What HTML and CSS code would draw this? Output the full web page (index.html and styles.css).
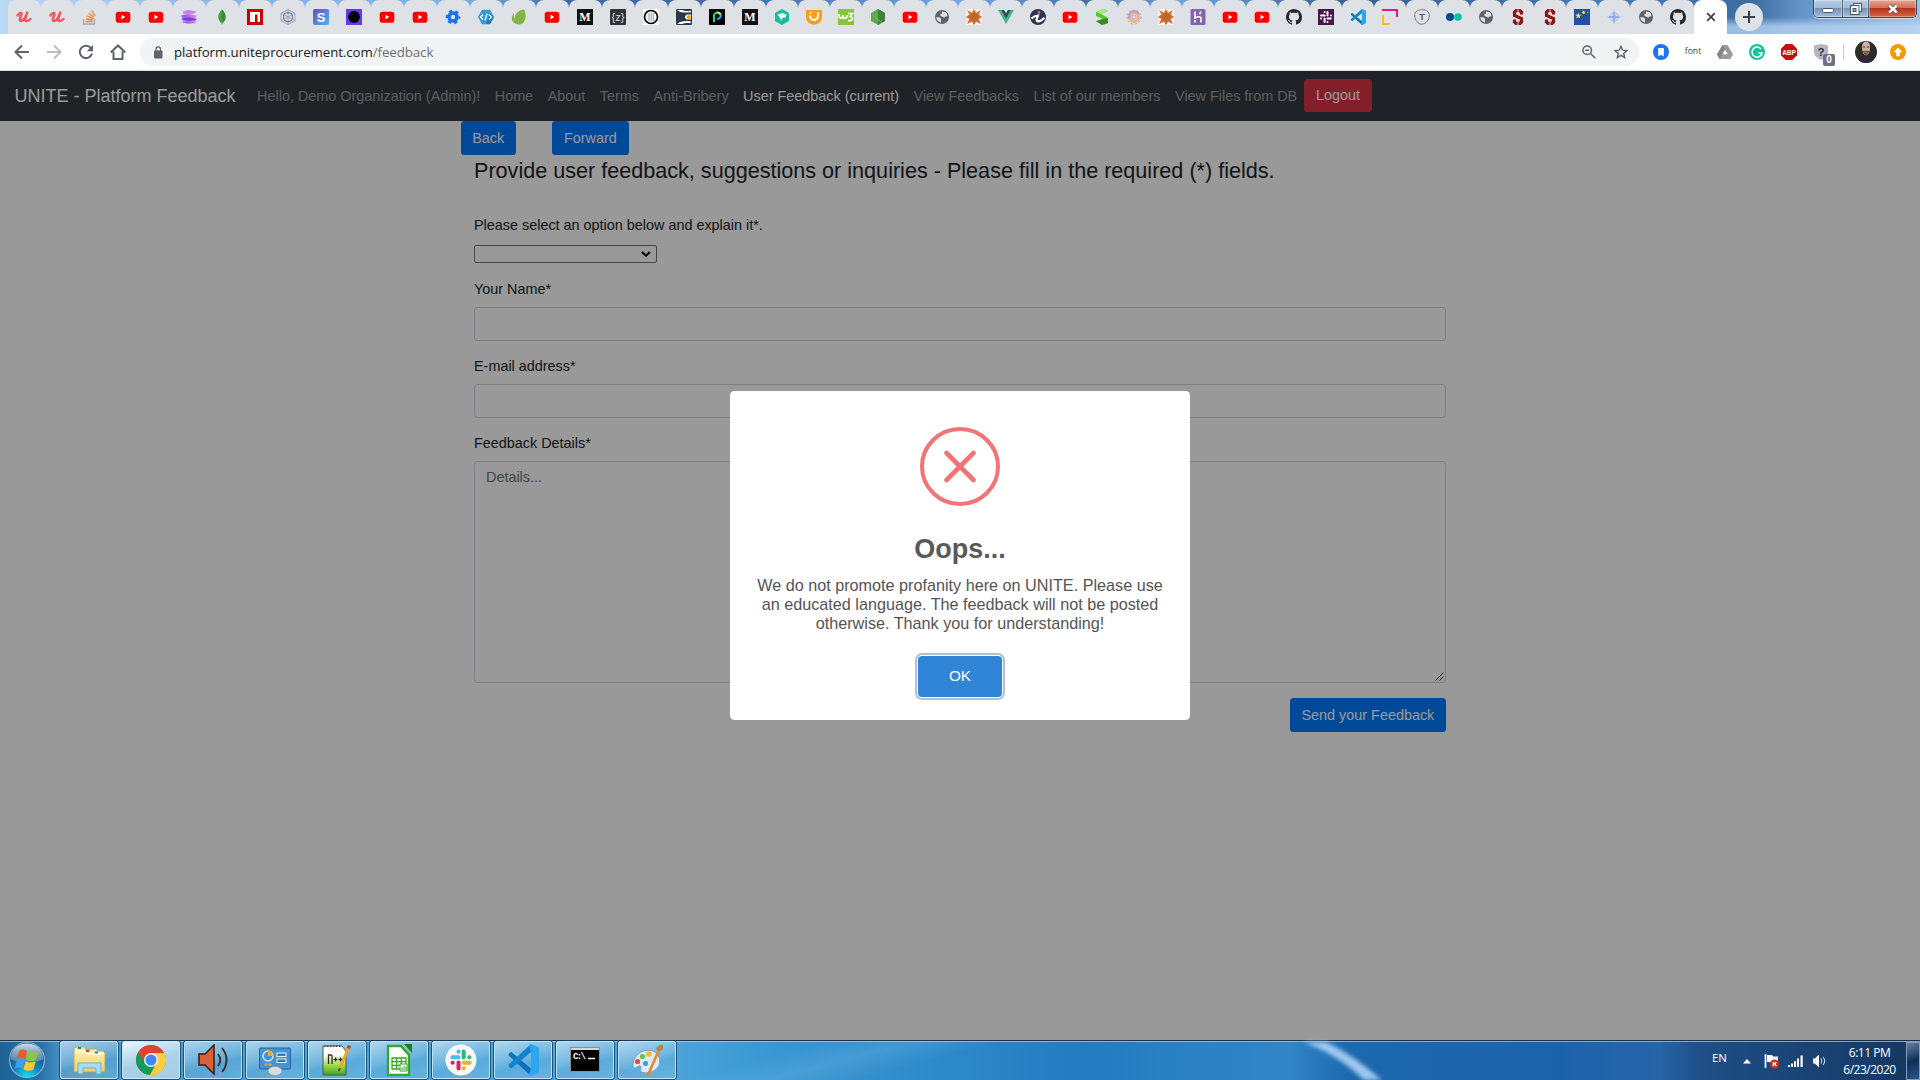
FILE: index.html
```html
<!DOCTYPE html>
<html lang="en">
<head>
<meta charset="utf-8">
<title>UNITE - Platform Feedback</title>
<link rel="stylesheet" href="styles.css">
</head>
<body>
<svg class="sprite" aria-hidden="true">
  <defs>
    <linearGradient id="gs" x1="0" y1="0" x2="1" y2="1"><stop offset="0" stop-color="#6a4bc4"/><stop offset="1" stop-color="#4db4f0"/></linearGradient>
    <linearGradient id="gl" x1="0" y1="0" x2="1" y2="0"><stop offset="0" stop-color="#8a4bf0"/><stop offset="1" stop-color="#f77fc0"/></linearGradient>
    <linearGradient id="gf" x1="0" y1="0" x2="0" y2="1"><stop offset="0" stop-color="#fff3b8"/><stop offset="1" stop-color="#e9cf6c"/></linearGradient>
    <linearGradient id="gn" x1="0" y1="0" x2="0" y2="1"><stop offset=".3" stop-color="#fff"/><stop offset=".65" stop-color="#a5dc4a"/><stop offset="1" stop-color="#3fa51c"/></linearGradient>
    <radialGradient id="go" cx=".5" cy="1" r=".9"><stop offset="0" stop-color="#12e4fb"/><stop offset=".45" stop-color="#1583b8"/><stop offset="1" stop-color="#16486e"/></radialGradient>
    <linearGradient id="gh" x1="0" y1="0" x2="0" y2="1"><stop offset="0" stop-color="#e4f0f8" stop-opacity=".9"/><stop offset="1" stop-color="#9fb9cb" stop-opacity=".35"/></linearGradient>
  </defs>
  <symbol id="udemy" viewBox="0 0 16 16"><path d="M1.500 6.500C3.500 3.300 6.200 3.200 5.400 5.500L4 9.500c-1 3.500 2.500 3.500 5-.5l2.300-5.500-1.900 6c-.8 3.300 2 3.500 5.100.5" fill="none" stroke="#f2545b" stroke-width="2.400" stroke-linecap="round" stroke-linejoin="round"/></symbol>
  <symbol id="stack" viewBox="0 0 16 16"><path d="M1.500 10v5h11v-5" fill="none" stroke="#a5a7aa" stroke-width="1.300"/><path d="M3.700 12.500h6.800M4 9.800l6.700 1.200M4.900 7l6.200 2.600M6.700 4.200l5.100 4.100M9.500 1.500l3.400 5.400" stroke="#ef8236" stroke-width="1.300"/></symbol>
  <symbol id="yt" viewBox="0 0 16 16"><rect x=".7" y="2.700" width="14.600" height="11" rx="2.800" fill="#f00"/><path d="M6.500 5.800v4.600L10.300 8z" fill="#fff"/></symbol>
  <symbol id="layers" viewBox="0 0 16 16"><path d="M2 2.500L7 1l8 1.500-1.500 2L7 5 2 4.500z" fill="#c77cf2"/><path d="M0 6.500l7-1.500 9 1.500-2 2.200-7 .5-6-.7z" fill="url(#gl)"/><path d="M1 9.300l7-.8 8 1.200-1.500 1.800-7 .5-6-.7z" fill="#5b45f5"/><path d="M0 13l7-1.300 9 .8-2 1.700-7 .6z" fill="url(#gl)"/></symbol>
  <symbol id="mongo" viewBox="0 0 16 16"><path d="M8 .5c-5 5-5 10 0 14.500z" fill="#46a037"/><path d="M8 .5c5 5 5 10 0 14.500z" fill="#3a8a2e"/><path d="M8 12v4" stroke="#9aa" stroke-width=".7"/></symbol>
  <symbol id="npm" viewBox="0 0 16 16"><path fill="#c00" d="M0 0h16v16H0z"/><path fill="#fff" d="M3 3h10v10h-2.500V5.500H8V13H3z"/></symbol>
  <symbol id="wire" viewBox="0 0 16 16"><g fill="none" stroke="#8ea0c0" stroke-width=".9"><path d="M8 .5l7 3.700v7.600l-7 3.700-7-3.700V4.200z"/><path d="M8 .5v15M1 4.200l14 7.600M15 4.200L1 11.800"/><circle cx="8" cy="8" r="4.500" stroke="#80858c" stroke-width="1.300"/></g></symbol>
  <symbol id="disc" viewBox="0 0 16 16"><path fill="#6c35f5" d="M0 0h16v16H0z"/><circle cx="8" cy="8" r="5.900"/></symbol>
  <symbol id="gear" viewBox="0 0 16 16"><circle cx="8" cy="8" r="4" fill="none" stroke="#1a73e8" stroke-width="3.600"/><circle cx="8" cy="8" r="6" fill="none" stroke="#1a73e8" stroke-width="2.600" stroke-dasharray="3.140 3.143" stroke-dashoffset="1.500"/></symbol>
  <symbol id="code" viewBox="0 0 16 16"><path d="M4 .8h8L16 8l-4 7.200H4L0 8z" fill="#3498db"/><path d="M8 15h4l4-7-4-4z" fill="#257bb5"/><path d="M5 5.500L2.500 8 5 10.500M11 5.500L13.500 8 11 10.500M9 4.500l-2 7" fill="none" stroke="#fff" stroke-width="1.200"/></symbol>
  <symbol id="leaf" viewBox="0 0 16 16"><path d="M13 .5c3 5 2 15-5 15C-1 15 0 7 3 4c-.2 4 0 5 .6 6C4 4 8 1 13 .5z" fill="#82b541"/></symbol>
  <symbol id="ring" viewBox="0 0 16 16"><path fill="#fff" d="M0 0h16v16H0z"/><circle cx="8" cy="8" r="6.500" fill="none" stroke="#000" stroke-width="1.700"/><path d="M6 4v8M8.200 3.500v9M10.300 4v8" stroke="#aaa" stroke-width="1.200"/></symbol>
  <symbol id="eye" viewBox="0 0 16 16"><rect width="16" height="16" rx="1" fill="#2b3a4a"/><path d="M1 1c4 3 8 3 14 2v2.500h-4.500c-2 1.500-2 3.500 0 5H15v2c-6-1-10-.5-14 2.500h5c3-1.500 6-1 9-.7V1.700C12 2 9 2.500 6 1z" fill="#fff"/><circle cx="12.800" cy="8" r="2.100" fill="#ffa000"/></symbol>
  <symbol id="pea" viewBox="0 0 16 16"><path d="M0 0h16v16H0z"/><path d="M5 13V8a3.600 3.600 0 0 1 3.500-4.500" fill="none" stroke="#20d878" stroke-width="2"/><path d="M8 3.500c5 0 5 6 0 6.500" fill="none" stroke="#25a8f5" stroke-width="2"/><path d="M8 3.500c2 0 3 .8 3.500 2" fill="none" stroke="#ffe11a" stroke-width="2"/></symbol>
  <symbol id="hexg" viewBox="0 0 16 16"><path d="M8 0l7 4v8l-7 4-7-4V4z" fill="#16bf9b"/><path d="M3.500 5.500L8 4l4.500 1.500L11 9H8l-.5 3L6 9z" fill="#fff"/></symbol>
  <symbol id="cup" viewBox="0 0 16 16"><path d="M0 1h16v7c0 10-16 10-16 0z" fill="#f9a01b"/><path d="M4 6.500c0 6 8 6 8 0V3.500" fill="none" stroke="#fff" stroke-width="2"/><circle cx="4.500" cy="4" r="1" fill="#fff"/></symbol>
  <symbol id="w3" viewBox="0 0 16 16"><path fill="#86c540" d="M0 0h16v16H0z"/><path d="M1 5c0 6 4 5 4 1 0 5 4 4 4.500 0M10 4.500h4.500L12 7.500c4 .5 3 5-2 4" fill="none" stroke="#fff" stroke-width="1.700"/></symbol>
  <symbol id="node" viewBox="0 0 16 16"><path d="M8 0l7 4v8l-7 4-7-4V4z" fill="#5fa84f"/><path d="M8 0l7 4v8l-7 4z" fill="#3c8539"/><path d="M1 4l11 10" stroke="#77bd61"/></symbol>
  <symbol id="globe" viewBox="0 0 16 16"><circle cx="8" cy="8" r="7" fill="#5f6368"/><path d="M8 2.500c3.500-.5 5.500 2 5.500 4-1 1.500-2.200.7-3.200 2.200L8 7.500C5 7 6 4.500 8 4.800zM2.300 8.300c2.500 0 4-.3 4.700 1.500.5 1-.5 1.700.2 3.600-3-.2-4.900-2.600-4.900-5.100z" fill="#dee1e6"/></symbol>
  <symbol id="sun" viewBox="0 0 16 16"><path fill="#f4f0e8" d="M0 0h16v16H0z"/><path d="M8 0l2 4 5-3-2.500 4.500L16 8l-3.500 2L15 15l-5-2.500L8 16l-2-3.500L1 15l2.500-5L0 8l3.500-2.500L1 1l5 3z" fill="#d8642c"/><path d="M8 3v10M3 8h10M4.500 4.500l7 7M11.500 4.500l-7 7" stroke="#957033" stroke-width=".8"/></symbol>
  <symbol id="vue" viewBox="0 0 16 16"><path d="M0 1h6l2 3.500L10 1h6L8 15z" fill="#41b883"/><path d="M3.200 1H6l2 3.500L10 1h2.800L8 9.500z" fill="#35495e"/></symbol>
  <symbol id="eyei" viewBox="0 0 16 16"><circle cx="8" cy="8" r="8" fill="#2c3553"/><path d="M1.500 9.500c2-2 3.500-2.800 6.500-3L6.500 11c0 1.500 2 1.700 4 .8l4-3" fill="none" stroke="#fff" stroke-width="2.200"/><circle cx="9" cy="3.400" r="1.400" fill="#f16a4f"/></symbol>
  <symbol id="ribbon" viewBox="0 0 16 16"><path d="M2 3l8-3 4 2-7 3 7 4v5l-6 2-6-4 7 1V10L2 7z" fill="#56c62c"/><path d="M9 10l5-1v5l-6 2-6-4z" fill="#2c9321"/><path d="M2 3l8-3 4 2-7 3z" fill="#a4eb76"/></symbol>
  <symbol id="donut" viewBox="0 0 16 16"><circle cx="8" cy="8" r="4.500" fill="none" stroke="#ecb58b" stroke-width="3.500"/><path d="M3.500 9.500a5 5 0 0 1 9-4.500" fill="none" stroke="#bda2c9" stroke-width="2.500"/><circle cx="8" cy="8" r="7.100" fill="none" stroke="#b8a3c0" stroke-width="1" stroke-dasharray="2 2"/><circle cx="8" cy="8" r="2" fill="#e8dfe6" stroke="#b49ac0" stroke-width=".8"/></symbol>
  <symbol id="heroku" viewBox="0 0 16 16"><rect x=".5" width="15" height="16" rx="1.500" fill="#8365ac"/><path d="M5 2.500V9c4-2 6-1.500 6 .5v4M10.700 2.500c0 1-.5 2-1.200 2.500M5 11v2.500" fill="none" stroke="#fff" stroke-width="1.600"/></symbol>
  <symbol id="github" viewBox="0 0 16 16"><path fill="#24292e" d="M8 0C3.580 0 0 3.580 0 8c0 3.540 2.290 6.530 5.470 7.590.4.070.55-.17.55-.38 0-.19-.01-.82-.01-1.490-2.010.37-2.530-.49-2.690-.94-.09-.23-.48-.94-.82-1.130-.28-.15-.68-.52-.01-.53.63-.01 1.080.58 1.230.82.72 1.210 1.870.87 2.330.66.07-.52.28-.87.51-1.070-1.780-.2-3.640-.89-3.640-3.950 0-.87.31-1.590.82-2.150-.08-.2-.36-1.020.08-2.120 0 0 .67-.21 2.200.82.64-.18 1.320-.27 2-.27s1.360.09 2 .27c1.530-1.040 2.200-.82 2.200-.82.44 1.100.16 1.920.08 2.120.51.56.82 1.270.82 2.150 0 3.070-1.870 3.750-3.650 3.950.29.25.54.73.54 1.480 0 1.070-.01 1.930-.01 2.200 0 .21.15.46.55.38A8 8 0 0 0 16 8c0-4.420-3.580-8-8-8z"/></symbol>
  <symbol id="slackd" viewBox="0 0 16 16"><path fill="#4a154b" d="M0 0h16v16H0z"/><g stroke="#fff" stroke-width="2" stroke-linecap="round" fill="none"><path d="M6.600 3v.1M3 6.500h3.700M13 6.500h-.1M9.500 3v3.500M9.500 13v-.1M13 9.500H9.500M3 9.500h.1M6.600 13V9.500"/></g></symbol>
  <symbol id="vscode" viewBox="0 0 16 16"><path d="M1 4.600L2.200 4 12 12.200V16L.8 5.700z" fill="#0e71b8"/><path d="M.8 10.300L12 0v4L2.200 12.200 1 11.500z" fill="#1184d0"/><path d="M12 0l4 1.800v12.400L12 16l-1-.6 1-3.200V3.800L11 .6z" fill="#2da6ee"/></symbol>
  <symbol id="corner" viewBox="0 0 16 16"><path d="M0 1h15v7" fill="none" stroke="#f0127f" stroke-width="2"/><path d="M1 6v9h7" fill="none" stroke="#fdbf0f" stroke-width="2"/></symbol>
  <symbol id="flickr" viewBox="0 0 16 16"><circle cx="4" cy="8" r="4" fill="#06498a"/><circle cx="12" cy="8" r="3.800" fill="#06c39b"/></symbol>
  <symbol id="stanford" viewBox="0 0 16 16"><path d="M11.500 5.500V3L10 1.700H6L4.500 3v3.500l7 3V13L10 14.300H6L4.500 13v-2.500" fill="none" stroke="#8c1515" stroke-width="3.200"/><path d="M8 0v4.500M8 11.500V16" stroke="#e3cdd0" stroke-width="1"/></symbol>
  <symbol id="eu" viewBox="0 0 16 16"><path fill="#2250a4" d="M0 0h16v16H0z"/><path d="M4.300 3.500l.9 2.300h2.400L5.700 7.300l.7 2.300-2.100-1.400-2.100 1.400.7-2.300L1 5.800h2.400zM9 1.500l1.800 1L11 4.500l-2 .5-1-1.500zM13.500 2.500l1 .5-.5 1-1-.5z" fill="#fde41a"/></symbol>
  <symbol id="compass" viewBox="0 0 16 16"><circle cx="8" cy="8" r="4.200" fill="none" stroke="#a9bde8"/><path d="M8 0l1.200 6.800L16 8l-6.800 1.200L8 16 6.800 9.200 0 8l6.800-1.200z" fill="#7c9ee6" opacity=".8"/></symbol>
</svg>

<header class="browser">
  <div class="tabstrip">
    <div class="tabs">
      <div class="tab"><svg><use href="#udemy"/></svg></div>
      <div class="tab"><svg><use href="#udemy"/></svg></div>
      <div class="tab"><svg><use href="#stack"/></svg></div>
      <div class="tab"><svg><use href="#yt"/></svg></div>
      <div class="tab"><svg><use href="#yt"/></svg></div>
      <div class="tab"><svg><use href="#layers"/></svg></div>
      <div class="tab"><svg><use href="#mongo"/></svg></div>
      <div class="tab"><svg><use href="#npm"/></svg></div>
      <div class="tab"><svg><use href="#wire"/></svg></div>
      <div class="tab"><svg viewBox="0 0 16 16"><rect width="16" height="16" rx="2" fill="url(#gs)"/><text x="8" y="12.500" text-anchor="middle" font-size="13" font-weight="900" fill="#fff">S</text></svg></div>
      <div class="tab"><svg><use href="#disc"/></svg></div>
      <div class="tab"><svg><use href="#yt"/></svg></div>
      <div class="tab"><svg><use href="#yt"/></svg></div>
      <div class="tab"><svg><use href="#gear"/></svg></div>
      <div class="tab"><svg><use href="#code"/></svg></div>
      <div class="tab"><svg><use href="#leaf"/></svg></div>
      <div class="tab"><svg><use href="#yt"/></svg></div>
      <div class="tab"><svg viewBox="0 0 16 16"><path fill="#111" d="M0 0h16v16H0z"/><text x="8" y="12" text-anchor="middle" font-family="Liberation Serif" font-weight="bold" font-size="12" fill="#fff">M</text></svg></div>
      <div class="tab"><svg viewBox="0 0 16 16"><rect width="16" height="16" rx="1" fill="#333"/><text x="8" y="11.500" text-anchor="middle" font-size="11" fill="#ddd">{z}</text></svg></div>
      <div class="tab"><svg><use href="#ring"/></svg></div>
      <div class="tab"><svg><use href="#eye"/></svg></div>
      <div class="tab"><svg><use href="#pea"/></svg></div>
      <div class="tab narrow"><svg viewBox="0 0 16 16"><path fill="#111" d="M0 0h16v16H0z"/><text x="8" y="12" text-anchor="middle" font-family="Liberation Serif" font-weight="bold" font-size="12" fill="#fff">M</text></svg></div>
      <div class="tab narrow"><svg><use href="#hexg"/></svg></div>
      <div class="tab narrow"><svg><use href="#cup"/></svg></div>
      <div class="tab narrow"><svg><use href="#w3"/></svg></div>
      <div class="tab narrow"><svg><use href="#node"/></svg></div>
      <div class="tab narrow"><svg><use href="#yt"/></svg></div>
      <div class="tab narrow"><svg><use href="#globe"/></svg></div>
      <div class="tab narrow"><svg><use href="#sun"/></svg></div>
      <div class="tab narrow"><svg><use href="#vue"/></svg></div>
      <div class="tab narrow"><svg><use href="#eyei"/></svg></div>
      <div class="tab narrow"><svg><use href="#yt"/></svg></div>
      <div class="tab narrow"><svg><use href="#ribbon"/></svg></div>
      <div class="tab narrow"><svg><use href="#donut"/></svg></div>
      <div class="tab narrow"><svg><use href="#sun"/></svg></div>
      <div class="tab narrow"><svg><use href="#heroku"/></svg></div>
      <div class="tab narrow"><svg><use href="#yt"/></svg></div>
      <div class="tab narrow"><svg><use href="#yt"/></svg></div>
      <div class="tab narrow"><svg><use href="#github"/></svg></div>
      <div class="tab narrow"><svg><use href="#slackd"/></svg></div>
      <div class="tab narrow"><svg><use href="#vscode"/></svg></div>
      <div class="tab narrow"><svg><use href="#corner"/></svg></div>
      <div class="tab narrow"><svg viewBox="0 0 16 16"><path d="M8 .7c5-.2 7.500 2.500 7.300 6.300S12 15 8 15.200 1 11 .7 7 3 .9 8 .7z" fill="none" stroke="#777"/><text x="8" y="11.200" text-anchor="middle" font-size="9" font-weight="bold" fill="#555">T</text></svg></div>
      <div class="tab narrow"><svg><use href="#flickr"/></svg></div>
      <div class="tab narrow"><svg><use href="#globe"/></svg></div>
      <div class="tab narrow"><svg><use href="#stanford"/></svg></div>
      <div class="tab narrow"><svg><use href="#stanford"/></svg></div>
      <div class="tab narrow"><svg><use href="#eu"/></svg></div>
      <div class="tab narrow"><svg><use href="#compass"/></svg></div>
      <div class="tab narrow"><svg><use href="#globe"/></svg></div>
      <div class="tab narrow last"><svg><use href="#github"/></svg></div>
      <div class="tab active"><svg viewBox="0 0 16 16"><path d="M4.200 4.200l7.600 7.600M11.800 4.200l-7.600 7.600" stroke="#3c4043" stroke-width="1.700"/></svg></div>
    </div>
    <div class="newtab"><svg width="12" height="12"><path d="M6 0v12M0 6h12" stroke="#3c4043" stroke-width="2"/></svg></div>
    <div class="winbtns">
      <span class="wb wb-min"><svg width="13" height="6"><rect x=".5" y=".5" width="11" height="4" rx="1" fill="#fff" stroke="#4a5670"/></svg></span>
      <span class="wb wb-max"><svg width="12" height="12"><rect x="3.500" y=".5" width="8" height="8" fill="#fff" stroke="#4a5670"/><rect x=".5" y="2.500" width="8.500" height="9" fill="#fff" stroke="#4a5670"/><rect x="3" y="5.500" width="3" height="3" fill="#89a2c0" stroke="#4a5670"/></svg></span>
      <span class="wb wb-close"><svg width="12" height="10"><path d="M2 1.500l8 7M10 1.500l-8 7" stroke="#5a3a40" stroke-width="4.200"/><path d="M2.200 1.500l7.600 7M9.800 1.500l-7.600 7" stroke="#fff" stroke-width="2.600"/></svg></span>
    </div>
  </div>

  <div class="toolbar">
    <div class="navicons">
      <svg viewBox="0 0 16 16"><path d="M15 8H2M8 1.500L1.500 8 8 14.500" fill="none" stroke="#5f6368" stroke-width="2"/></svg>
      <svg viewBox="0 0 16 16"><path d="M1 8h13M8 1.500L14.500 8 8 14.500" fill="none" stroke="#babcbe" stroke-width="2"/></svg>
      <svg viewBox="0 0 16 16"><path d="M13 4.200A6.200 6.200 0 1 0 14 9.500" fill="none" stroke="#5f6368" stroke-width="2"/><path d="M15 1v6.300H8.800z" fill="#5f6368"/></svg>
      <svg viewBox="0 0 16 16"><path d="M3.500 7.500V15h9V7.500M.7 8.500L8 1.500l7.300 7" fill="none" stroke="#5f6368" stroke-width="2"/></svg>
    </div>
    <div class="omnibox">
      <svg class="lock" viewBox="0 0 10 13"><rect x="1" y="4.500" width="8.500" height="8" rx="1" fill="#5f6368"/><path d="M3 5V3.200a2.200 2.200 0 0 1 4.500 0V5" fill="none" stroke="#5f6368" stroke-width="1.300"/></svg>
      <span class="url">platform.uniteprocurement.com<span class="path">/feedback</span></span>
      <svg class="mag" viewBox="0 0 14 14"><circle cx="5.200" cy="5.200" r="4.300" fill="none" stroke="#5f6368" stroke-width="1.500"/><path d="M8.500 8.500l4.800 4.800M3.200 5.200h4" stroke="#5f6368" stroke-width="1.500"/></svg>
      <svg class="star" viewBox="0 0 14 14"><path d="M7 1.200l1.700 4 4.300.4-3.300 2.800 1 4.200L7 10.300l-3.700 2.300 1-4.200L1 5.600l4.300-.4z" fill="none" stroke="#5f6368" stroke-width="1.400"/></svg>
    </div>
    <div class="exts">
      <span class="ext"><svg viewBox="0 0 16 16"><circle cx="8" cy="8" r="8" fill="#1a73f8"/><path d="M5.200 4h5.600v8.500L8 10.800l-2.800 1.700z" fill="#fff"/></svg></span>
      <span class="ext fonttxt">font</span>
      <span class="ext"><svg viewBox="0 0 16 16"><path d="M5.500 1h5L16 10.500 13.300 15H2.700L0 10.500z" fill="#9a9a9a"/><path d="M0 10.500L5.500 1 8 5.500 2.700 15z" fill="#858585"/><path d="M8 5.700l2.700 4.600H5.300z" fill="#fff"/></svg></span>
      <span class="ext"><svg viewBox="0 0 16 16"><circle cx="8" cy="8" r="8" fill="#15c39a"/><path d="M12 5a5 5 0 1 0 1 4H9.500M12.500 9v3" fill="none" stroke="#fff" stroke-width="1.500"/></svg></span>
      <span class="ext"><svg viewBox="0 0 16 16"><path d="M4.700 0h6.600L16 4.700v6.600L11.300 16H4.700L0 11.300V4.700z" fill="#c70d0d"/><text x="1.200" y="10.700" font-size="7.500" font-weight="bold" fill="#fff" textLength="13.600" lengthAdjust="spacingAndGlyphs">ABP</text></svg></span>
      <span class="ext shield"><svg viewBox="0 0 16 16"><path d="M1 1.500L8 0l7 1.500V8c0 4-4 6.500-7 8-3-1.500-7-4-7-8z" fill="#b5b5c5"/><text x="8" y="11.500" text-anchor="middle" font-size="11.500" font-weight="bold" fill="#333">?</text></svg><b class="count">0</b></span>
    </div>
    <i class="vsep"></i>
    <svg class="avatar" viewBox="0 0 22 22"><clipPath id="av"><circle cx="11" cy="11" r="11"/></clipPath><g clip-path="url(#av)"><path fill="#2a2e25" d="M0 0h22v22H0z"/><path d="M2 22c1-6 5-7 9-7s9 2 10 7z" fill="#33243d"/><path d="M7 5c0-6 8-6 8 0 0 5-1 9-4 9S7 10 7 5z" fill="#d0b0a2"/><path d="M7.800 10c2-.8 4.500-.8 6.400 0-.5 3-1.700 4.500-3.200 4.500S8.300 13 7.800 10z" fill="#7c5d52"/><path d="M8 6h2.200M12 6h2.200" stroke="#463530"/></g></svg>
    <svg class="update" viewBox="0 0 16 16"><circle cx="8" cy="8" r="8" fill="#f29900"/><path d="M8 3.500l4.500 4.700h-2.700v4H6.200v-4H3.500z" fill="#fff"/></svg>
  </div>
</header>

<div class="page">
  <nav class="navbar">
    <a class="brand">UNITE - Platform Feedback</a>
    <a class="link">Hello, Demo Organization (Admin)!</a>
    <a class="link">Home</a>
    <a class="link">About</a>
    <a class="link">Terms</a>
    <a class="link">Anti-Bribery</a>
    <a class="link current">User Feedback (current)</a>
    <a class="link">View Feedbacks</a>
    <a class="link">List of our members</a>
    <a class="link">View Files from DB</a>
    <button class="btn danger">Logout</button>
  </nav>
  <main class="content">
    <div class="history"><button class="btn">Back</button><button class="btn forward">Forward</button></div>
    <form class="form">
      <h4 class="title">Provide user feedback, suggestions or inquiries - Please fill in the required (*) fields.</h4>
      <label class="lbl">Please select an option below and explain it*.</label>
      <div class="select"><svg width="10" height="6"><path d="M1 1l4 3.700L9 1" fill="none" stroke="#000" stroke-width="2"/></svg></div>
      <label class="lbl">Your Name*</label>
      <div class="input"></div>
      <label class="lbl">E-mail address*</label>
      <div class="input"></div>
      <label class="lbl">Feedback Details*</label>
      <div class="input area"><span>Details...</span><svg width="9" height="9"><path d="M.5 8.500l8-8M4.500 8.500l4-4" stroke="#444" stroke-width="1"/></svg></div>
      <button class="btn send">Send your Feedback</button>
    </form>
  </main>
  <div class="backdrop">
    <div class="modal">
      <svg class="erricon" viewBox="0 0 80 79"><ellipse cx="40" cy="39.500" rx="38" ry="37.500" fill="none" stroke="#f27474" stroke-width="4"/><path d="M26.500 26l27 27M53.500 26l-27 27" stroke="#f27474" stroke-width="4.700" stroke-linecap="round"/></svg>
      <h2 class="mtitle">Oops...</h2>
      <p class="mtext">We do not promote profanity here on UNITE. Please use an educated language. The feedback will not be posted otherwise. Thank you for understanding!</p>
      <button class="ok">OK</button>
    </div>
  </div>
</div>

<footer class="taskbar">
  <svg class="streak" viewBox="0 0 120 40" preserveAspectRatio="none"><path d="M2 0h24c20 10 38 24 56 40H64C46 22 26 8 2 0z" fill="#b4d8fa"/></svg>
  <svg class="orb" viewBox="0 0 38 38"><circle cx="19" cy="19" r="17.500" fill="url(#go)" stroke="#86b0cc" stroke-width="1.200"/><path d="M2.500 18C3 8 10 2.500 19 2.500S35 8 35.500 18c-9 5-24 5-33 0z" fill="url(#gh)"/><path d="M11 10c3-2 5-2 8-.3l-2 8.300c-3-2-5-1.500-8 .2z" fill="#ef5a28"/><path d="M20 10.300c3 1.700 6 1.500 10 0L28 19c-4 1.700-7 1.300-10-.4z" fill="#8cc63e"/><path d="M8.700 19.500c3-1.700 5-1.700 8 0l-2 8.200c-3-1.700-5-1.300-8 .3z" fill="#38a4e8"/><path d="M17.600 20.200c3 1.700 6 1.700 10 .2l-2.200 8.300c-4 1.500-7 1.300-10-.5z" fill="#fdc82f"/></svg>
  <div class="tasks">
    <span class="task"><svg viewBox="0 0 32 32"><path d="M1 4l4-1h6l2 3 5-1h5l2 2h5l2 2v19H1z" fill="url(#gf)" stroke="#c3a447" stroke-width=".8"/><path d="M2 7.500h13M14 10h16" stroke="#fffbe0" stroke-width="2"/><path d="M5 4h3" stroke="#16a038" stroke-width="2"/><path d="M13 7h3" stroke="#d92f1e" stroke-width="2"/><path d="M22 8.500h3" stroke="#1a80cf" stroke-width="2"/><path d="M5 30V19h23v11h-5v-6H10v6z" fill="#a8dcf3" stroke="#5da7cc" stroke-width=".8"/></svg></span>
    <span class="task on"><svg viewBox="0 0 32 32"><circle cx="16" cy="16" r="15" fill="#db4437"/><path d="M16 16L3 8.500a15 15 0 0 0 12 22.500l6.500-11.500z" fill="#0f9d58"/><path d="M16 16l5.500 3L15 31a15 15 0 0 0 14-22.500H16z" fill="#ffcd40"/><path d="M3 8.500A15 15 0 0 1 29 9H16a7 7 0 0 0-6.500 10z" fill="#db4437"/><circle cx="16" cy="16" r="7" fill="#f1f1f1"/><circle cx="16" cy="16" r="5.500" fill="#4285f4"/></svg></span>
    <span class="task"><svg viewBox="0 0 32 32"><path d="M2 10h6L17 1v29l-9-9H2z" fill="#d86138" stroke="#391914" stroke-width="1.500"/><path d="M21 10c3 4 3 8 0 12M25 4c6 7 6 17 0 24" fill="none" stroke="#3c2822" stroke-width="1.900"/></svg></span>
    <span class="task"><svg viewBox="0 0 32 32"><rect x=".5" y="4" width="31" height="21" rx="1" fill="#4494d2" stroke="#2c6299"/><circle cx="9" cy="12" r="5" fill="none" stroke="#c9e7fa" stroke-width="1.500"/><path d="M9 12V6a6 6 0 0 1 5 6z" fill="#f5a52a"/><rect x="18" y="9" width="9" height="3.500" fill="#2f7dbd" stroke="#e3f2fb"/><rect x="18" y="15" width="9" height="3.500" fill="#2f7dbd" stroke="#e3f2fb"/><circle cx="7" cy="20.500" r="1.500" fill="#f59e2f"/><circle cx="11" cy="20.500" r="1.500" fill="#f59e2f"/><ellipse cx="16" cy="27" rx="7" ry="4.500" fill="#d9dde0" stroke="#979da5"/></svg></span>
    <span class="task"><svg viewBox="0 0 32 32"><path d="M2 2h19l4 5v24H2z" fill="url(#gn)" stroke="#555" stroke-width="1"/><path d="M3 2h17" stroke="#555" stroke-width="2" stroke-dasharray="1.500 1.500"/><path d="M7.500 20v-9H10q1 0 1 1.500V20M12.500 15.500h4M14.500 13.500v4M17.500 15.500h4M19.500 13.500v4" fill="none" stroke="#2b2b2b" stroke-width="1.300"/><path d="M28 3L19 24" stroke="#f2a324" stroke-width="3"/><path d="M28.500 1.500l-1 3" stroke="#a34b3f" stroke-width="3.500"/><path d="M19 24l-1.500 3" stroke="#443322" stroke-width="1.500"/></svg></span>
    <span class="task"><svg viewBox="0 0 32 32"><path d="M5 2h13l8 9v20H5z" fill="#fff" stroke="#37a625" stroke-width="2.400"/><path d="M21 0h8v9z" fill="#18821b"/><path d="M9 14h14v11H9zM9 17.700h14M9 21.300h14M13.700 14v11M18.300 14v11" fill="none" stroke="#37a625" stroke-width="1.300"/><path d="M17 20h7v7h-7z" fill="#fff" stroke="#37a625"/><path d="M19 26v-2M21 26v-4M23 26v-3" stroke="#37a625"/></svg></span>
    <span class="task"><svg viewBox="0 0 32 32"><circle cx="16" cy="16" r="15.500" fill="#f8f8f8"/><g stroke-width="4" stroke-linecap="round" fill="none"><path d="M13.500 7.500v.2M7.500 13.300h6" stroke="#36c5f0"/><path d="M24.500 13.300h-.2M18.700 7.500v6" stroke="#2eb67d"/><path d="M18.700 24.500v-.2M24.700 18.700h-6" stroke="#ecb22e"/><path d="M7.500 18.700h.2M13.500 24.500v-6" stroke="#e01e5a"/></g></svg></span>
    <span class="task"><svg viewBox="0 0 16 16"><use href="#vscode"/></svg></span>
    <span class="task"><svg viewBox="0 0 32 32"><path fill="#000" stroke="#8f8f8f" d="M1.500 3.500h29v24h-29z"/><path fill="#d6d6d6" d="M2 4h28v2H2z"/><text x="4" y="15" font-family="Liberation Mono" font-weight="bold" font-size="9" fill="#fff" textLength="13">C:\</text><path d="M19 14.500h7" stroke="#fff" stroke-width="1.500"/></svg></span>
    <span class="task"><svg viewBox="0 0 32 32"><path d="M2 20C3 10 13 4 22 7c8 3 9 15 2 19-4 2.500-9 3.500-14 2-1-2 1-5-1-6s-3 2-5 2-2-2-2-4z" fill="#dcebf6" stroke="#7ba4c2"/><circle cx="6.500" cy="17.500" r="2.600" fill="#e94b35"/><circle cx="11.500" cy="12.500" r="2.600" fill="#6fbf44"/><circle cx="18" cy="10" r="2.800" fill="#f7b928"/><circle cx="14.500" cy="19.500" r="2.500" fill="#4897cf"/><path d="M27 8L17 31" stroke="#e8862c" stroke-width="2.600"/><path d="M25 5c1-4 5-5 7-4 1 3-1 6-4 7z" fill="#b98452"/></svg></span>
  </div>
  <div class="tray">
    <span class="lang">EN</span>
    <svg class="t-arrow" width="8" height="5"><path d="M4 0l4 4.500H0z" fill="#fff"/></svg>
    <svg class="t-flag" width="16" height="16"><path d="M1.500 1v14" stroke="#fff" stroke-width="1.700"/><path d="M3 2h5l1 1.500h5V9H3z" fill="#fff"/><circle cx="10.500" cy="11" r="4.500" fill="#d42a20"/><path d="M8.700 9.200l3.600 3.600M12.300 9.200l-3.600 3.600" stroke="#fff" stroke-width="1.500"/></svg>
    <svg class="t-sig" width="16" height="13"><path d="M0 11h2v2H0zM3 9.500h2V13H3zM6 7h2v6H6zM9 4.500h2V13H9zM12.500 1.500h2.200V13h-2.200z" fill="#fff"/></svg>
    <svg class="t-vol" width="16" height="14"><path d="M1 4.500h2L7 .5v13L3 9.500H1z" fill="#fff"/><path d="M9 4.500c1 1.500 1 3.500 0 5M11 3c2.200 2.500 2.200 5.500 0 8" fill="none" stroke="#c9d6e6" stroke-width="1.100"/></svg>
    <div class="clock"><span>6:11 PM</span><span>6/23/2020</span></div>
    <i class="peek"></i>
  </div>
</footer>
</body>
</html>
```
FILE: styles.css
```css
* { box-sizing: border-box; }
html, body { margin: 0; height: 100%; overflow: hidden; }
body {
  display: flex;
  flex-direction: column;
  font-family: "Liberation Sans", Arial, sans-serif;
  font-size: 14.4px;
  color: #212529;
}
.sprite { position: absolute; width: 0; height: 0; }
button { font-family: inherit; border: 0; }

/* browser window */
.browser { height: 71px; flex: none; background: #fff; border-bottom: 1px solid #dadce0; }
.tabstrip {
  display: flex;
  height: 34px;
  padding-left: 8.300px;
  background:
    linear-gradient(180deg, rgba(190,217,245,0) 50%, rgba(190,217,245,.75) 78%) 1700px 0 / 220px 34px no-repeat,
    linear-gradient(90deg, #b9d9f5 0, #a5c9ee 110px, #8ab4e6 230px, #7fb0e6 460px, #3f69a3 570px, #3f6ea8 740px, #72a6e4 960px, #41719f 1090px, #6ea2dd 1180px, #355f8f 1350px, #4779b5 1600px, #3c6c9f 1750px, #6393c8 1800px, #9dbfe4 1920px);
}
.tabs { display: flex; }
.tab {
  position: relative;
  width: 33px;
  height: 34px;
  padding: 9px 0 0 8px;
  background: #dee1e6;
  border-radius: 8px 8px 0 0;
}
.tab.narrow { width: 32px; }
.tab svg { display: block; width: 16px; height: 16px; }
.tab::after {
  content: "";
  position: absolute;
  right: -1px;
  top: 8px;
  width: 1px;
  height: 19px;
  background: #85888d;
}
.tab.last::after, .tab.active::after { display: none; }
.tab.active { background: #fff; padding-left: 9px; }
.newtab {
  display: flex;
  align-items: center;
  justify-content: center;
  width: 28px;
  height: 28px;
  margin: 3px 0 0 7.700px;
  border-radius: 50%;
  background: #dee1e6;
}
.winbtns {
  display: flex;
  height: 18px;
  margin-left: auto;
  margin-right: 3px;
  border: 1px solid #38495f;
  border-top: 0;
  border-radius: 0 0 5px 5px;
  overflow: hidden;
  box-shadow: 0 1px 0 #c9def3;
}
.wb { display: flex; align-items: center; justify-content: center; width: 28px; background: linear-gradient(#b6cbe0 0, #a1bbd6 45%, #7794b5 50%, #a4bfda 100%); box-shadow: inset 0 0 0 1px rgba(255,255,255,.35); }
.wb-min { padding-top: 4px; }
.wb-max { width: 27px; border-left: 1px solid #50637c; border-right: 1px solid #50637c; }
.wb-close { width: 47px; background: linear-gradient(#e6a595 0, #d3705b 45%, #b9321c 50%, #d4684a 100%); }

.toolbar { display: flex; align-items: center; height: 36px; padding: 0 14px; }
.navicons { display: flex; gap: 16px; width: 126px; }
.navicons svg { width: 16px; height: 16px; }
.omnibox {
  display: flex;
  align-items: center;
  width: 1499px;
  height: 28px;
  padding: 0 11px 0 13px;
  border-radius: 14px;
  background: #f1f3f4;
}
.lock { width: 10px; height: 13px; margin-right: 11px; }
.url { flex: 1; font: 13.300px "Open Sans", "Noto Sans", sans-serif; letter-spacing: -.08px; color: #202124; white-space: nowrap; }
.path { color: #6c7075; }
.mag, .star { width: 14px; height: 14px; }
.star { margin-left: 18px; }
.exts { display: flex; margin-left: 6px; }
.ext { display: flex; align-items: center; justify-content: center; width: 32px; height: 28px; position: relative; }
.ext svg { width: 16px; height: 16px; }
.fonttxt { font: 8.700px "Open Sans", sans-serif; color: #444; padding-bottom: 2px; }
.count {
  position: absolute;
  right: 2px;
  bottom: 0;
  width: 12px;
  height: 12px;
  border-radius: 2px;
  background: #70707e;
  color: #fff;
  font-size: 10px;
  line-height: 12px;
  text-align: center;
}
.vsep { width: 1px; height: 16px; margin: 0 11px 0 6px; background: #c8cacd; }
.avatar { width: 22px; height: 22px; margin-right: 13px; }
.update { width: 16px; height: 16px; }

/* web page */
.page { position: relative; flex: 1; min-height: 0; background: #fff; }
.navbar { display: flex; align-items: center; height: 50px; padding-left: 14.400px; background: #343a40; white-space: nowrap; }
.brand { margin-right: 14.400px; font-size: 18px; color: #fff; }
.link { padding: 0 7.260px; color: rgba(255,255,255,.5); }
.current { color: #fff; }
.btn {
  height: 34px;
  padding: 0 11.700px 1px;
  border-radius: 3.600px;
  background: #007bff;
  color: #fff;
  font-size: 14.400px;
}
.danger { height: 33px; background: #dc3545; margin-bottom: 1px; padding-bottom: 2px; }
.forward { width: 77px; }
.content { width: 999px; margin: 0 auto; }
.history { display: flex; gap: 36px; }
.form { display: flex; flex-direction: column; width: 972px; margin: 0 auto; }
.title { margin: 3px 0 30px; font-size: 21.600px; line-height: 26px; font-weight: 500; white-space: nowrap; }
.lbl { height: 22px; line-height: 22px; margin-bottom: 7px; }
.select {
  display: flex;
  align-items: center;
  justify-content: flex-end;
  width: 183px;
  height: 18px;
  padding-right: 5px;
  margin: 2px 0 15px;
  border: 1px solid #767676;
  border-radius: 2px;
}
.input { height: 34px; border: 1px solid #ced4da; border-radius: 3.600px; margin-bottom: 14px; }
.area { display: flex; justify-content: space-between; height: 222px; margin-bottom: 15px; padding: 5px 1px 1px 11px; color: #6c757d; line-height: 21.600px; }
.area svg { align-self: flex-end; }
.send { align-self: flex-end; }

/* alert dialog */
.backdrop { position: absolute; inset: 0; display: flex; justify-content: center; align-items: center; background: rgba(0,0,0,.4); }
.modal {
  display: flex;
  flex-direction: column;
  align-items: center;
  width: 460px;
  height: 329px;
  padding: 36px 18px 0;
  border-radius: 4.500px;
  background: #fff;
}
.erricon { width: 80px; height: 79px; flex: none; }
.mtitle { margin: 27px 0 0; font-size: 27px; line-height: 32px; color: #595959; }
.mtext { margin: 11px 0 0; font-size: 16.200px; line-height: 19px; color: #545454; text-align: center; }
.ok {
  width: 84px;
  height: 41px;
  margin-top: 23px;
  padding: 0 0 2px;
  border-radius: 4px;
  background: #3085d6;
  color: #fff;
  font-size: 15.300px;
  box-shadow: 0 0 0 1px #fff, 0 0 0 3px rgba(50,100,150,.4);
}

/* desktop taskbar */
.taskbar {
  position: relative;
  display: flex;
  height: 40px;
  flex: none;
  border-top: 1px solid #1d2f44;
  box-shadow: inset 0 1px 0 rgba(190,220,245,.65);
  background:
    linear-gradient(165deg, rgba(255,255,255,0) 35%, rgba(130,195,235,.22) 52%, rgba(255,255,255,0) 70%) 660px 0 / 340px 40px no-repeat,
    linear-gradient(90deg, #1f6396 0, #2670a8 40px, #4596c9 62px, #4aa4d8 300px, #4fa6da 660px, #3b98d2 760px, #2f8aca 930px, #237cc0 1080px, #3185c7 1290px, #1d68ae 1350px, #1c62ab 1560px, #2764a8 1660px, #1e4f86 1700px, #173b68 1880px, #15365f 1920px);
}
.streak { position: absolute; left: 1300px; top: 1px; width: 120px; height: 38px; filter: blur(2px); opacity: .85; }
.orb { width: 38px; height: 38px; margin: 0 14px 0 8px; }
.tasks { display: flex; gap: 4px; }
.task {
  display: flex;
  align-items: center;
  justify-content: center;
  width: 58px;
  height: 38px;
  border: 1px solid rgba(205,233,250,.85);
  border-radius: 3px;
  background: linear-gradient(165deg, rgba(255,255,255,.55) 0, rgba(255,255,255,.22) 45%, rgba(255,255,255,.08) 60%, rgba(255,255,255,.15) 100%);
  box-shadow: 0 0 0 1px rgba(20,60,95,.8);
}
.task.on { background: linear-gradient(165deg, rgba(255,255,255,.9) 0, rgba(255,255,255,.55) 50%, rgba(255,255,255,.5) 100%); }
.task svg { width: 32px; height: 32px; }
.tray { display: flex; align-items: center; margin-left: auto; color: #fff; font: 12px "Open Sans", "Noto Sans", sans-serif; }
.lang { margin-bottom: 7px; font-size: 11.500px; }
.t-arrow { margin-left: 16px; margin-top: 2px; }
.t-flag { margin-left: 13px; margin-top: 1px; }
.t-sig { margin-left: 8px; }
.t-vol { margin-left: 8px; margin-top: 1px; }
.clock { display: flex; flex-direction: column; align-items: center; width: 78px; padding-left: 5px; line-height: 17px; letter-spacing: -.5px; white-space: nowrap; }
.peek { width: 14px; height: 38px; border: 1px solid #7f9cba; background: linear-gradient(160deg, rgba(255,255,255,.35), rgba(10,40,80,.5) 50%, rgba(70,130,190,.4)); }
```
